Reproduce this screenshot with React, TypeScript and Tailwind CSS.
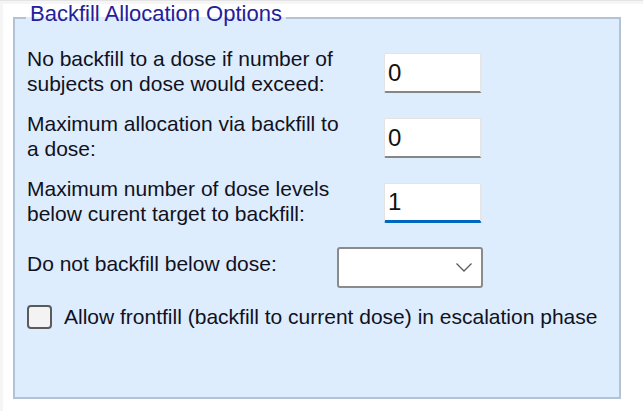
import React from 'react';

const font = { fontFamily: '"Liberation Sans", Arial, sans-serif' };

function NumberBox({ value, focused }: { value: string; focused?: boolean }) {
  return (
    <input
      type="text"
      readOnly
      defaultValue={value}
      className={
        'w-[98px] h-[40px] bg-white pl-[3px] text-[24px] text-[#111] outline-none border-t border-l border-r-2 border-t-[#e3e3e3] border-l-[#e3e3e3] border-r-[#e6e6e6] rounded-[2px] ' +
        (focused ? 'border-b-[3px] border-b-[#0067c0]' : 'border-b-2 border-b-[#868686]')
      }
      style={font}
    />
  );
}

function FieldRow({ lines, value, focused }: { lines: string[]; value: string; focused?: boolean }) {
  return (
    <div className="grid grid-cols-[357px_98px]">
      <div className="text-[21px] leading-[25px] text-[#111122]">
        {lines.map((l) => (
          <div key={l}>{l}</div>
        ))}
      </div>
      <div className="mt-[7px]">
        <NumberBox value={value} focused={focused} />
      </div>
    </div>
  );
}

export default function App() {
  return (
    <div
      className="w-[643px] h-[411px] bg-white border-t border-[#e4e4e4] shadow-[inset_3px_3px_0_#f5f5f5] pl-[13px] overflow-hidden"
      style={font}
    >
      <fieldset className="w-[608px] h-[398px] border-2 border-[#b3c2d6] bg-[#ddedfd] p-0 m-0">
        <legend className="ml-[11px] px-[4px] pb-[8px] text-[22px] leading-[26px] text-[#24209a]">
          Backfill Allocation Options
        </legend>
        <div className="pl-[12px] pt-[11px] flex flex-col">
          <FieldRow lines={['No backfill to a dose if number of', 'subjects on dose would exceed:']} value="0" />
          <div className="mt-[15px]">
            <FieldRow lines={['Maximum allocation via backfill to', 'a dose:']} value="0" />
          </div>
          <div className="mt-[15px]">
            <FieldRow
              lines={['Maximum number of dose levels', 'below curent target to backfill:']}
              value="1"
              focused
            />
          </div>
          <div className="mt-[21px] flex items-start">
            <div className="w-[310px] mt-[4px] text-[21px] leading-[25px] text-[#111122]">
              Do not backfill below dose:
            </div>
            <div className="w-[146px] h-[41px] bg-white border-2 border-[#8b8b8b] rounded-[3px] flex items-center justify-end pr-[9px]">
              <svg width="16" height="9" viewBox="0 0 16 9">
                <polyline points="0.5,0.5 8,8 15.5,0.5" fill="none" stroke="#5c5c5c" strokeWidth="1.3" />
              </svg>
            </div>
          </div>
          <div className="mt-[16px] flex items-center">
            <div className="w-[25px] h-[24px] rounded-[4px] border-2 border-[#5b5b5b] bg-[#f3f3f3]" />
            <span className="ml-[12px] text-[21px] leading-[25px] text-[#111122]">
              Allow frontfill (backfill to current dose) in escalation phase
            </span>
          </div>
        </div>
      </fieldset>
    </div>
  );
}
